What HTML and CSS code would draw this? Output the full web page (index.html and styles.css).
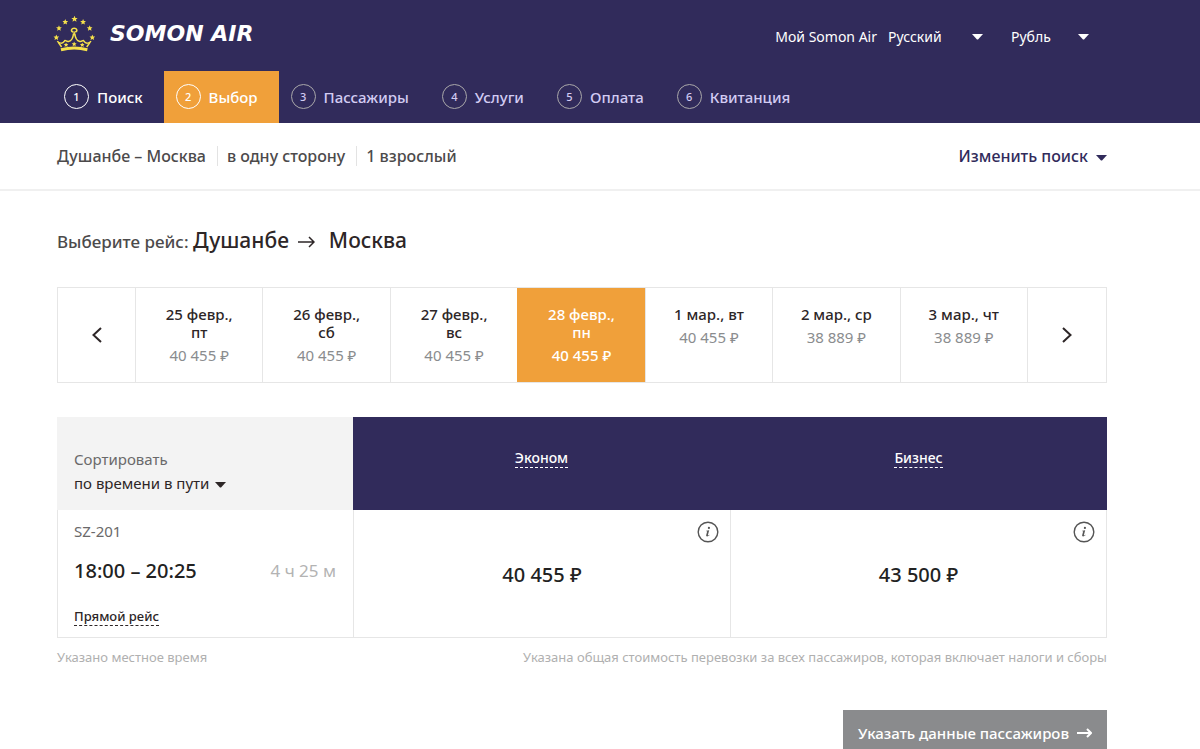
FILE: index.html
```html
<!DOCTYPE html>
<html lang="ru">
<head>
<meta charset="utf-8">
<meta name="viewport" content="width=device-width, initial-scale=1">
<title>Somon Air</title>
<link rel="stylesheet" href="styles.css">
</head>
<body>
<svg width="0" height="0" class="defs" aria-hidden="true">
  <symbol id="star" viewBox="-8 -8 16 16"><path d="M0-7.8 2.300-2.600 7.800-2.400 3.500 1.400 4.900 7 0 3.900-4.900 7-3.500 1.400-7.800-2.400-2.300-2.600Z"/></symbol>
  <symbol id="caret" viewBox="0 0 11 6"><path d="M0 0H11L6.5 5Q5.5 6 4.500 5Z"/></symbol>
  <symbol id="info" viewBox="0 0 22 22"><circle cx="11" cy="11" r="9.800" fill="none" stroke="currentColor" stroke-width="1.400"/><circle cx="11.900" cy="6.900" r="1.100"/><path d="M9.200 9.700 12.200 9.200 10.900 14Q10.800 14.700 12.500 13.700L12.700 14.100Q10.800 15.700 9.600 15.300 8.900 15 9.200 13.900L10.200 10.200 9.200 10.200Z"/></symbol>
</svg>
<header class="header">
  <div class="header-top wrap">
    <a class="logo" href="#">
      <svg class="crown" viewBox="40 42 130 112" width="43" height="37" aria-hidden="true">
        <use href="#star" x="41" y="101" width="18" height="18"/>
        <use href="#star" x="49" y="73" width="18" height="18"/>
        <use href="#star" x="68" y="54" width="18" height="18"/>
        <use href="#star" x="95" y="44" width="20" height="20"/>
        <use href="#star" x="122" y="54" width="18" height="18"/>
        <use href="#star" x="142" y="73" width="18" height="18"/>
        <use href="#star" x="150" y="101" width="18" height="18"/>
        <g fill="none" stroke="currentColor" stroke-width="4.500">
          <path d="M101 94C92 90 96 82 104 82S116 90 107 94M104 92V104"/>
          <path d="M102 98C101 111 96 120 87 122 80 124 77 115 74 122 69 130 58 128 53 121M106 98C107 111 112 120 121 122 128 124 131 115 134 122 139 130 150 128 155 121"/>
          <path d="M56 125 66 139M152 125 142 139"/>
          <path d="M64 147Q104 137 144 147" stroke-width="9"/>
        </g>
        <use href="#star" x="72" y="125" width="15" height="15"/>
        <use href="#star" x="96" y="122" width="16" height="16"/>
        <use href="#star" x="121" y="125" width="15" height="15"/>
      </svg>
      <span>SOMON AIR</span>
    </a>
    <div class="account">
      <a href="#">Мой Somon Air</a>
      <span class="pick pick-lang">
        <select aria-label="Язык"><option>Русский</option></select>
        <svg width="11" height="6" aria-hidden="true"><use href="#caret"/></svg>
      </span>
      <span class="pick pick-cur">
        <select aria-label="Валюта"><option>Рубль</option></select>
        <svg width="11" height="6" aria-hidden="true"><use href="#caret"/></svg>
      </span>
    </div>
  </div>
  <nav class="steps">
    <a class="step done" href="#"><span class="num">1</span>Поиск</a>
    <a class="step current" href="#" aria-current="step"><span class="num">2</span>Выбор</a>
    <a class="step" href="#"><span class="num">3</span>Пассажиры</a>
    <a class="step" href="#"><span class="num">4</span>Услуги</a>
    <a class="step" href="#"><span class="num">5</span>Оплата</a>
    <a class="step" href="#"><span class="num">6</span>Квитанция</a>
  </nav>
</header>
<section class="summary wrap">
  <div class="trip"><span>Душанбе – Москва</span><span>в одну сторону</span><span>1 взрослый</span></div>
  <button class="change" type="button">Изменить поиск <svg width="11" height="6" aria-hidden="true"><use href="#caret"/></svg></button>
</section>
<main class="main wrap">
  <h1 class="title">Выберите рейс: <strong>Душанбе <svg class="title-arrow" width="17" height="12" viewBox="0 0 17 12" aria-hidden="true"><path d="M0 6H15.500M11 1 16 6 11 11"/></svg> Москва</strong></h1>
  <div class="dates">
    <button class="nav" type="button" aria-label="Раньше"><svg width="10" height="16" viewBox="0 0 10 16"><path d="M9 1 1.500 8 9 15"/></svg></button>
    <button class="date" type="button"><span class="day">25 февр.,<br>пт</span><span class="fare">40 455 ₽</span></button>
    <button class="date" type="button"><span class="day">26 февр.,<br>сб</span><span class="fare">40 455 ₽</span></button>
    <button class="date" type="button"><span class="day">27 февр.,<br>вс</span><span class="fare">40 455 ₽</span></button>
    <button class="date selected" type="button" aria-pressed="true"><span class="day">28 февр.,<br>пн</span><span class="fare">40 455 ₽</span></button>
    <button class="date" type="button"><span class="day">1 мар., вт</span><span class="fare">40 455 ₽</span></button>
    <button class="date" type="button"><span class="day">2 мар., ср</span><span class="fare">38 889 ₽</span></button>
    <button class="date" type="button"><span class="day">3 мар., чт</span><span class="fare">38 889 ₽</span></button>
    <button class="nav" type="button" aria-label="Позже"><svg width="10" height="16" viewBox="0 0 10 16"><path d="M1 1 8.500 8 1 15"/></svg></button>
  </div>
  <table class="flights">
    <thead>
      <tr>
        <th class="sort"><span class="sort-label">Сортировать</span><button class="sort-by" type="button">по времени в пути <svg width="11" height="6" aria-hidden="true"><use href="#caret"/></svg></button></th>
        <th class="cabin"><a class="dashed" href="#">Эконом</a></th>
        <th class="cabin"><a class="dashed" href="#">Бизнес</a></th>
      </tr>
    </thead>
    <tbody>
      <tr>
        <td class="flight">
          <div class="number">SZ-201</div>
          <div class="times"><span class="time">18:00 – 20:25</span><span class="duration">4 ч 25 м</span></div>
          <a class="dashed direct" href="#">Прямой рейс</a>
        </td>
        <td class="price"><button class="info" type="button" aria-label="Информация о тарифе Эконом"><svg width="22" height="22"><use href="#info"/></svg></button><span class="amount">40 455 ₽</span></td>
        <td class="price"><button class="info" type="button" aria-label="Информация о тарифе Бизнес"><svg width="22" height="22"><use href="#info"/></svg></button><span class="amount">43 500 ₽</span></td>
      </tr>
    </tbody>
  </table>
  <div class="notes"><span>Указано местное время</span><span>Указана общая стоимость перевозки за всех пассажиров, которая включает налоги и сборы</span></div>
  <div class="actions">
    <button class="next" type="button">Указать данные пассажиров <svg width="15" height="10" viewBox="0 0 15 10" aria-hidden="true"><path d="M0 5H14M10 1 14 5 10 9"/></svg></button>
  </div>
</main>
</body>
</html>
```
FILE: styles.css
```css
* { box-sizing: border-box; }
body {
  margin: 0;
  background: #fff;
  color: #2d2627;
  font: 16px/20px "Noto Sans", "Open Sans", sans-serif;
}
a { color: inherit; text-decoration: none; }
button, select {
  font: inherit;
  color: inherit;
  background: none;
  border: 0;
  padding: 0;
  border-radius: 0;
}
svg { fill: currentColor; }
.defs { display: none; }
.wrap { padding-left: 57px; padding-right: 93px; }

.header { background: #312b5b; color: #fff; }
.header-top { display: flex; justify-content: space-between; height: 71px; }
.logo {
  display: flex;
  align-items: center;
  gap: 14px;
  margin-left: -4px;
  padding-bottom: 4px;
  font: italic bold 22px/24px "DejaVu Sans", sans-serif;
}
.crown { color: #f6e14b; }
.account {
  display: flex;
  align-items: center;
  padding: 3px 18px 0 0;
  font-size: 14px;
}
.pick { display: grid; align-items: center; }
.pick select, .pick svg { grid-area: 1 / 1; }
.pick svg { justify-self: end; pointer-events: none; }
.pick select { appearance: none; width: 100%; }
.pick-lang { width: 95px; margin-left: 11px; }
.pick-cur { width: 78px; margin-left: 28px; }
.steps { display: flex; padding-left: 52px; }
.step {
  display: flex;
  align-items: center;
  gap: 8px;
  height: 52px;
  padding: 0 21px 0 12px;
  color: #d3ccf3;
  font-size: 15px;
  font-weight: 500;
}
.step.done, .step.current { color: #fff; }
.step.current { background: #f0a03a; }
.num {
  width: 25px;
  height: 25px;
  margin-bottom: 2px;
  border: 1px solid #a9a7a9;
  border-radius: 50%;
  font-size: 11px;
  line-height: 23px;
  text-align: center;
}
.done .num, .current .num { border-color: #fff; }

.summary {
  display: flex;
  justify-content: space-between;
  align-items: center;
  height: 68px;
  border-bottom: 2px solid #f0f0f0;
  color: #4c4a4b;
}
.trip { display: flex; font-weight: 500; }
.trip span + span { margin-left: 11px; padding-left: 9px; border-left: 1px solid #e3e3e3; }
.change { display: flex; align-items: center; gap: 8px; color: #312b5b; font-weight: 500; }
.change svg { margin-top: 4px; }

.main { padding-top: 34px; }
.title { margin: 0 0 30px; font-size: 17px; line-height: 30px; font-weight: 500; color: #4c4a4b; }
.title strong { font-size: 21px; font-weight: 500; color: #2d2627; }
.title-arrow { margin: 0 8px 0 4px; }
.title-arrow, .nav svg, .next svg { fill: none; stroke: currentColor; stroke-width: 2; }
.title-arrow { stroke-width: 1.500; }

.dates {
  display: grid;
  grid-template-columns: 77px repeat(7, 1fr) 79px;
  height: 96px;
  border: 1px solid #e6e6e6;
}
.dates button + button { border-left: 1px solid #e6e6e6; }
.nav { padding-top: 4px; }
.date { display: flex; flex-direction: column; align-items: center; gap: 4px; padding-top: 17px; font-size: 15px; }
.day { line-height: 18px; font-weight: 500; }
.fare { line-height: 20px; color: #8a8c8e; }
.dates .selected { background: #f0a03a; border-color: #f0a03a; color: #fff; font-weight: 500; }
.selected .fare { color: #fff; }

.flights { width: 100%; margin-top: 34px; border-collapse: separate; border-spacing: 0; table-layout: fixed; }
th { height: 93px; padding: 0; font-weight: 500; }
.sort { width: 296px; padding: 14px 17px 0; background: #f3f3f3; text-align: left; font-weight: 400; font-size: 15px; }
.sort-label { display: block; color: #6a696a; line-height: 24px; }
.sort-by { display: flex; align-items: center; gap: 6px; line-height: 24px; }
.sort-by svg { margin-top: 4px; }
.cabin { padding-bottom: 12px; background: #312b5b; color: #fff; font-size: 14px; }
.dashed { display: inline-block; border-bottom: 1px dashed; line-height: 18px; }
td { height: 128px; border: solid #e6e6e6; border-width: 0 0 1px 1px; vertical-align: top; }
td:last-child { border-right-width: 1px; }
td.flight { padding: 11px 17px 9px 16px; }
.number { font-size: 15px; color: #6a696a; }
.times { display: flex; justify-content: space-between; align-items: center; margin: 16px 0 20px; line-height: 28px; }
.time { font-size: 20px; font-weight: 500; color: #222; }
.duration { font-size: 17px; color: #b3b3b3; }
.direct { font-size: 13px; font-weight: 500; }
td.price { padding: 11px 11px 0; }
.info { display: block; height: 22px; margin-left: auto; color: #555; }
.amount { display: block; margin-top: 18px; font-size: 20px; font-weight: 500; line-height: 28px; text-align: center; color: #222; }

.notes { display: flex; justify-content: space-between; margin-top: 9px; font-size: 13px; color: #b0b0b0; }
.actions { display: flex; justify-content: flex-end; margin-top: 43px; height: 39px; overflow: hidden; }
.next { display: flex; align-items: center; gap: 8px; height: 46px; padding: 0 15px; background: #8a8b8d; color: #fff; font-size: 15px; font-weight: 500; }
```
